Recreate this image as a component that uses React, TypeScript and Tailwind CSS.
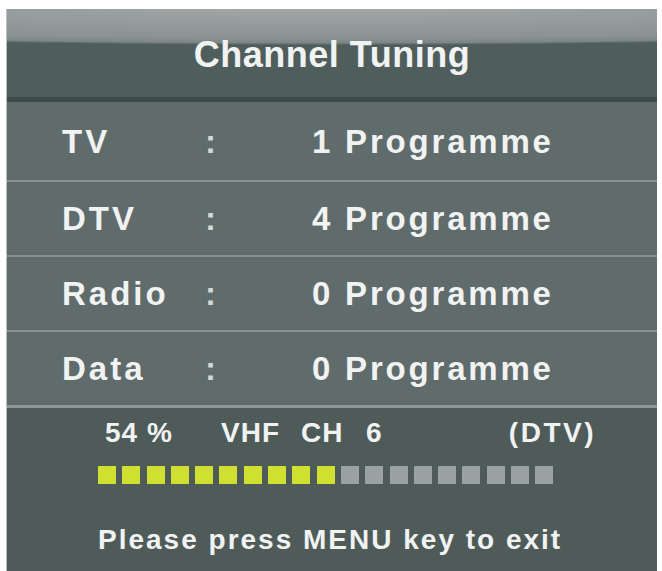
const font = { fontFamily: '"Liberation Sans", Arial, sans-serif' };

const rows = [
  { label: 'TV', count: 1 },
  { label: 'DTV', count: 4 },
  { label: 'Radio', count: 0 },
  { label: 'Data', count: 0 },
];

const TOTAL_STEPS = 19;
const LIT_STEPS = 10;

export default function App() {
  return (
    <div className="min-h-[571px] w-[662px] bg-white pl-[6px] pr-[5px] pt-[9px]" style={font}>
      <div className="flex h-[562px] w-[651px] flex-col overflow-hidden border-l border-[#b9bfbe] font-bold text-[#f1f2f2]">
        {/* title bar */}
        <div className="flex h-[93px] shrink-0 items-center justify-center border-b-[5px] border-[#3d4a48] bg-[radial-gradient(ellipse_140%_36px_at_50%_0%,#a2a6a6_0%,#8a9392_80%,#7c8685_94%,#4f5e5c_100%)] bg-[#4f5e5c]">
          <h1 className="pt-[4px] text-[36px] leading-none tracking-[0.5px]">Channel Tuning</h1>
        </div>

        {/* programme counts */}
        <div className="flex shrink-0 flex-col bg-[#606c6b]">
          {rows.map((r, i) => (
            <div
              key={r.label}
              className={
                i === 0
                  ? 'grid h-[78px] grid-cols-[143px_107px_1fr] items-center pl-[55px]'
                  : 'grid h-[75px] grid-cols-[143px_107px_1fr] items-center border-t-2 border-[#87918f] pl-[55px]'
              }
            >
              <span className="text-[33px] leading-none tracking-[3px]">{r.label}</span>
              <span className="text-[33px] leading-none text-[#d3d9d8]">:</span>
              <span className="text-[33px] leading-none tracking-[2.8px]">{r.count} Programme</span>
            </div>
          ))}
        </div>

        {/* scan status */}
        <div className="flex flex-1 flex-col border-t-[3px] border-[#8d9796] bg-[#4e5b59]">
          <div className="mt-[11px] grid grid-cols-[116px_80px_65px_1fr_auto] pl-[98px] pr-[61px] text-[28px] leading-none tracking-[1px]">
            <span>54 %</span>
            <span>VHF</span>
            <span>CH</span>
            <span>6</span>
            <span className="tracking-[2.5px]">(DTV)</span>
          </div>

          <div className="mt-[19px] flex gap-[6.3px] pl-[91px]">
            {Array.from({ length: TOTAL_STEPS }).map((_, i) => (
              <div
                key={i}
                className={i < LIT_STEPS ? 'h-[18px] w-[18px] bg-[#cfe030]' : 'h-[18px] w-[18px] bg-[#99a2a1]'}
              />
            ))}
          </div>

          <p className="mt-[42px] pl-[91px] text-[28px] leading-none tracking-[2px]">Please press MENU key to exit</p>
        </div>
      </div>
    </div>
  );
}
